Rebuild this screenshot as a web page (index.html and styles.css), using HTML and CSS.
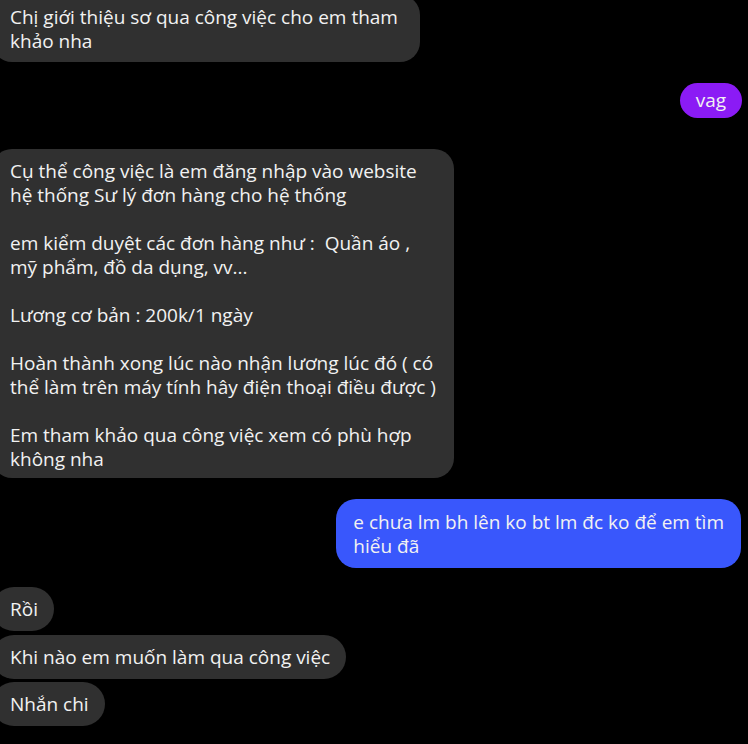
FILE: index.html
```html
<!DOCTYPE html>
<html lang="vi">
<head>
<meta charset="utf-8">
<title>Chat</title>
<link rel="stylesheet" href="styles.css">
</head>
<body>
<div class="chat">
  <div class="msg in first">Chị giới thiệu sơ qua công việc cho em tham
khảo nha</div>
  <div class="msg out purple">vag</div>
  <div class="msg in big">Cụ thể công việc là em đăng nhập vào website
hệ thống Sư lý đơn hàng cho hệ thống

em kiểm duyệt các đơn hàng như :  Quần áo ,
mỹ phẩm, đồ da dụng, vv...

Lương cơ bản : 200k/1 ngày

Hoàn thành xong lúc nào nhận lương lúc đó ( có
thể làm trên máy tính hây điện thoại điều được )

Em tham khảo qua công việc xem có phù hợp
không nha</div>
  <div class="msg out blue">e chưa lm bh lên ko bt lm đc ko để em tìm
hiểu đã</div>
  <div class="msg in small r1">Rồi</div>
  <div class="msg in small r2">Khi nào em muốn làm qua công việc</div>
  <div class="msg in small r3">Nhắn chi</div>
</div>
</body>
</html>
```
FILE: styles.css
```css
html, body {
  margin: 0;
  padding: 0;
  background: #000;
}
body {
  width: 748px;
  height: 744px;
  overflow: hidden;
  font-family: "Open Sans", "Noto Sans", sans-serif;
  font-size: 19px;
  line-height: 24px;
  color: #f2f2f2;
}
.chat {
  display: flex;
  flex-direction: column;
  align-items: flex-start;
}
.msg {
  white-space: pre-wrap;
  box-sizing: border-box;
}
.in {
  background: #303030;
  margin-left: -8px;
  padding: 10px 16px 9px 18px;
  border-radius: 20px;
}
.first {
  margin-top: -5px;
  padding-right: 22px;
}
.out {
  align-self: flex-end;
}
.purple {
  background: #8b1bf5;
  margin-top: 21px;
  margin-right: 6px;
  width: 62px;
  height: 35px;
  padding: 5px 0 6px;
  text-align: center;
  border-radius: 18px;
}
.big {
  margin-top: 31px;
  padding-top: 10px;
  padding-bottom: 7px;
  padding-right: 18px;
  border-radius: 20px;
}
.blue {
  background: #3957fc;
  margin-top: 21px;
  margin-right: 7px;
  padding: 11px 17px 10px 17px;
  border-radius: 20px;
}
.small {
  padding-top: 10px;
  padding-bottom: 10px;
  border-radius: 22px;
}
.r1 { margin-top: 19px; }
.r2 { margin-top: 4px; }
.r3 { margin-top: 3px; }
```
